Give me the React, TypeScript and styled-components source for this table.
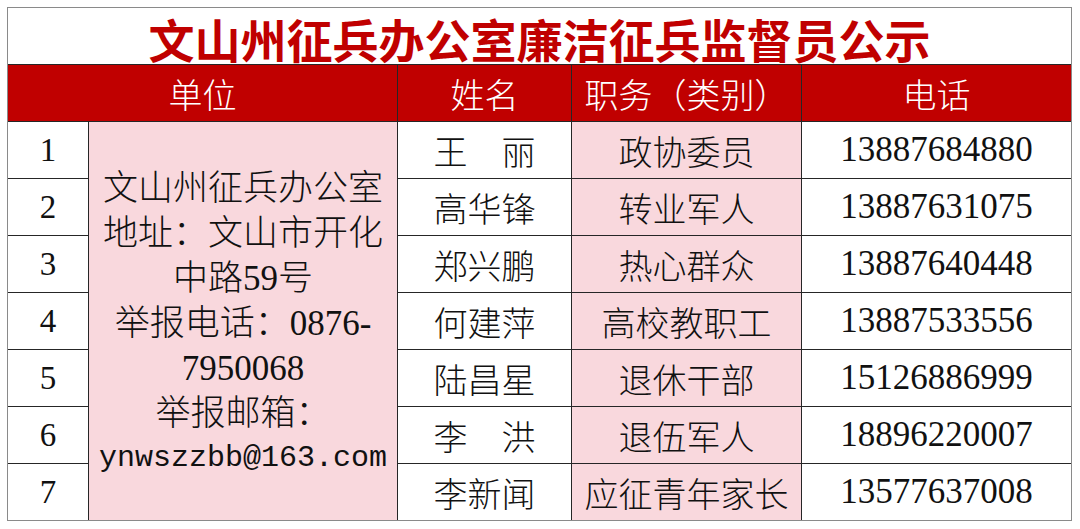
import React from "react";
import styled, { createGlobalStyle } from "styled-components";

const GlobalStyle = createGlobalStyle`
  html, body {
    margin: 0;
    padding: 0;
    background: #fff;
  }
`;

const Page = styled.div`
  padding: 7px;
`;

const Board = styled.div`
  display: grid;
  grid-template-columns: 80px 308px 173px 229px 269px;
  grid-template-rows: repeat(9, 56px);
  gap: 1px;
  width: max-content;
  background: #262626;
  border: 1px solid #8a8a8a;
  font-family: "Liberation Serif", "Noto Sans CJK SC", serif;
  font-weight: 300;
`;

const Title = styled.div`
  grid-column: 1 / -1;
  background: #fff;
  display: flex;
  align-items: center;
  justify-content: center;
  padding-top: 3px;
  color: #c00000;
  font-family: "Noto Sans CJK SC", sans-serif;
  font-weight: 700;
  font-size: 46px;
`;

const Head = styled.div<{ $span?: number }>`
  grid-column: span ${(p) => p.$span ?? 1};
  background: #c00000;
  color: #fff;
  display: flex;
  align-items: center;
  justify-content: center;
  font-family: "Noto Sans CJK SC", sans-serif;
  font-weight: 300;
  font-size: 34px;
`;

const Cell = styled.div<{ $pink?: boolean; $size?: number }>`
  background: ${(p) => (p.$pink ? "#f9d8dd" : "#fff")};
  color: #111;
  display: flex;
  align-items: center;
  justify-content: center;
  font-size: ${(p) => p.$size ?? 34}px;
  white-space: pre;
`;

const UnitCell = styled.div`
  grid-column: 2;
  grid-row: 3 / span 7;
  background: #f9d8dd;
  color: #111;
  display: flex;
  flex-direction: column;
  align-items: center;
  justify-content: center;
  padding-top: 4px;
  font-size: 35px;
  line-height: 45px;
`;

const Line = styled.div<{ $mono?: boolean }>`
  white-space: nowrap;
  font-family: ${(p) =>
    p.$mono
      ? `"Liberation Mono", monospace`
      : `"Liberation Serif", "Noto Sans CJK SC", serif`};
  font-size: ${(p) => (p.$mono ? 30 : 35)}px;
`;

type Member = {
  no: number;
  name: string;
  role: string;
  phone: string;
};

const members: Member[] = [
  { no: 1, name: "王　丽", role: "政协委员", phone: "13887684880" },
  { no: 2, name: "高华锋", role: "转业军人", phone: "13887631075" },
  { no: 3, name: "郑兴鹏", role: "热心群众", phone: "13887640448" },
  { no: 4, name: "何建萍", role: "高校教职工", phone: "13887533556" },
  { no: 5, name: "陆昌星", role: "退休干部", phone: "15126886999" },
  { no: 6, name: "李　洪", role: "退伍军人", phone: "18896220007" },
  { no: 7, name: "李新闻", role: "应征青年家长", phone: "13577637008" }
];

export default function App() {
  return (
    <Page>
      <GlobalStyle />
      <Board>
        <Title>文山州征兵办公室廉洁征兵监督员公示</Title>

        <Head $span={2}>单位</Head>
        <Head>姓名</Head>
        <Head>职务（类别）</Head>
        <Head>电话</Head>

        <UnitCell>
          <Line>文山州征兵办公室</Line>
          <Line>地址：文山市开化</Line>
          <Line>中路59号</Line>
          <Line>举报电话：0876-</Line>
          <Line>7950068</Line>
          <Line>举报邮箱：</Line>
          <Line $mono>ynwszzbb@163.com</Line>
        </UnitCell>

        {members.map((m) => (
          <React.Fragment key={m.no}>
            <Cell $size={33} style={{ gridColumn: 1 }}>
              {m.no}
            </Cell>
            <Cell style={{ gridColumn: 3 }}>{m.name}</Cell>
            <Cell $pink>{m.role}</Cell>
            <Cell $size={35}>{m.phone}</Cell>
          </React.Fragment>
        ))}
      </Board>
    </Page>
  );
}
